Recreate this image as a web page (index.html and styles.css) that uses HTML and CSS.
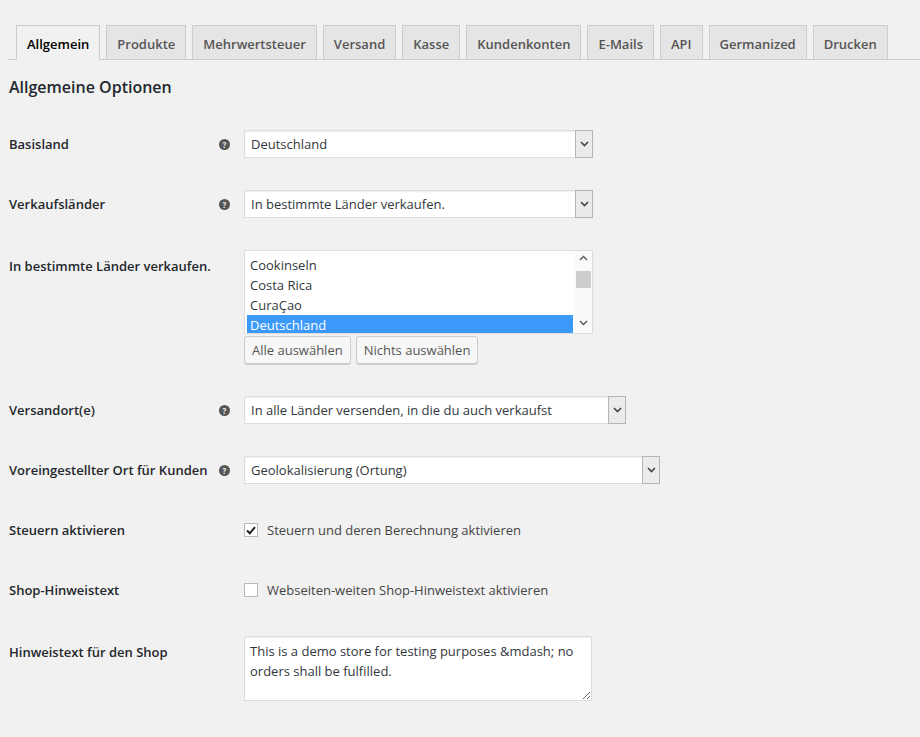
FILE: index.html
```html
<!DOCTYPE html>
<html lang="de">
  <head>
    <meta charset="UTF-8" />
    <title>Einstellungen - Allgemein</title>
    <link rel="stylesheet" href="styles.css">
  </head>
  <body>
    <div class="wrap">
      <!-- Settings tabs -->
      <nav class="tabs">
        <a class="tab active" href="#">Allgemein</a>
        <a class="tab" href="#">Produkte</a>
        <a class="tab" href="#">Mehrwertsteuer</a>
        <a class="tab" href="#">Versand</a>
        <a class="tab" href="#">Kasse</a>
        <a class="tab" href="#">Kundenkonten</a>
        <a class="tab" href="#">E-Mails</a>
        <a class="tab" href="#">API</a>
        <a class="tab" href="#">Germanized</a>
        <a class="tab" href="#">Drucken</a>
      </nav>

      <h2 class="section-title">Allgemeine Optionen</h2>

      <div class="form">
        <div class="row">
          <div class="label">Basisland <span class="help">?</span></div>
          <div class="field">
            <div class="select select-md">
              <span class="select-value">Deutschland</span>
              <span class="select-arrow"><svg width="9" height="6" viewBox="0 0 9 6"><path d="M1 1l3.5 3.5L8 1" fill="none" stroke="#444" stroke-width="1.6"/></svg></span>
            </div>
          </div>
        </div>

        <div class="row">
          <div class="label">Verkaufsländer <span class="help">?</span></div>
          <div class="field">
            <div class="select select-md">
              <span class="select-value">In bestimmte Länder verkaufen.</span>
              <span class="select-arrow"><svg width="9" height="6" viewBox="0 0 9 6"><path d="M1 1l3.5 3.5L8 1" fill="none" stroke="#444" stroke-width="1.6"/></svg></span>
            </div>
          </div>
        </div>

        <div class="row">
          <div class="label label-top">In bestimmte Länder verkaufen.</div>
          <div class="field">
            <div class="listbox">
              <div class="list-items">
                <div class="list-item">Cookinseln</div>
                <div class="list-item">Costa Rica</div>
                <div class="list-item">CuraÇao</div>
                <div class="list-item selected">Deutschland</div>
              </div>
              <div class="scrollbar">
                <svg width="9" height="6" viewBox="0 0 9 6"><path d="M1 5l3.5-3.5L8 5" fill="none" stroke="#555" stroke-width="1.4"/></svg>
                <div class="scroll-thumb"></div>
                <svg class="scroll-down" width="9" height="6" viewBox="0 0 9 6"><path d="M1 1l3.5 3.5L8 1" fill="none" stroke="#555" stroke-width="1.4"/></svg>
              </div>
            </div>
            <div class="button-group">
              <button class="button">Alle auswählen</button>
              <button class="button">Nichts auswählen</button>
            </div>
          </div>
        </div>

        <div class="row">
          <div class="label">Versandort(e) <span class="help">?</span></div>
          <div class="field">
            <div class="select select-lg">
              <span class="select-value">In alle Länder versenden, in die du auch verkaufst</span>
              <span class="select-arrow"><svg width="9" height="6" viewBox="0 0 9 6"><path d="M1 1l3.5 3.5L8 1" fill="none" stroke="#444" stroke-width="1.6"/></svg></span>
            </div>
          </div>
        </div>

        <div class="row">
          <div class="label">Voreingestellter Ort für Kunden <span class="help">?</span></div>
          <div class="field">
            <div class="select select-xl">
              <span class="select-value">Geolokalisierung (Ortung)</span>
              <span class="select-arrow"><svg width="9" height="6" viewBox="0 0 9 6"><path d="M1 1l3.5 3.5L8 1" fill="none" stroke="#444" stroke-width="1.6"/></svg></span>
            </div>
          </div>
        </div>

        <div class="row">
          <div class="label">Steuern aktivieren</div>
          <div class="field field-check">
            <span class="checkbox"><svg width="10" height="9" viewBox="0 0 10 9"><path d="M1 4.5l2.8 2.8L9 1.2" fill="none" stroke="#1e1e1e" stroke-width="2"/></svg></span>
            <span class="check-text">Steuern und deren Berechnung aktivieren</span>
          </div>
        </div>

        <div class="row">
          <div class="label">Shop-Hinweistext</div>
          <div class="field field-check">
            <span class="checkbox"></span>
            <span class="check-text">Webseiten-weiten Shop-Hinweistext aktivieren</span>
          </div>
        </div>

        <div class="row">
          <div class="label label-top">Hinweistext für den Shop</div>
          <div class="field">
            <textarea class="textarea" rows="3">This is a demo store for testing purposes &amp;mdash; no orders shall be fulfilled.</textarea>
          </div>
        </div>
      </div>
    </div>
  </body>
</html>
```

FILE: styles.css
```css
/* Page reset */
html,
body {
  margin: 0;
  padding: 0;
  background: #f1f1f1;
  font-family: "Open Sans", "Noto Sans", sans-serif;
  font-size: 13px;
  color: #23282d;
  overflow: hidden;
}

.wrap {
  padding-left: 9px;
}

/* Tabs */
.tabs {
  display: flex;
  gap: 6px;
  margin-left: -1px;
  padding: 25px 0 0 8px;
  border-bottom: 1px solid #ccc;
}

.tab {
  display: block;
  padding: 6px 10px 3px;
  line-height: 24px;
  font-size: 13px;
  font-weight: 600;
  color: #555;
  text-decoration: none;
  background: #e5e5e5;
  border: 1px solid #ccc;
  border-bottom: none;
}

.tab.active {
  background: #f1f1f1;
  color: #000;
  padding-bottom: 4px;
  margin-bottom: -1px;
}

/* Heading */
.section-title {
  margin: 16px 0 16px;
  font-size: 16px;
  line-height: 22px;
  font-weight: 600;
  color: #23282d;
}

/* Form rows */
.row {
  display: flex;
  align-items: flex-start;
  padding: 16px 0;
}

.label {
  width: 235px;
  flex-shrink: 0;
  display: flex;
  justify-content: space-between;
  align-items: center;
  line-height: 28px;
  font-weight: 600;
  color: #23282d;
}

.label-top {
  padding-top: 2px;
}

.help {
  width: 11px;
  height: 11px;
  margin-right: 14px;
  border-radius: 50%;
  background: #555;
  color: #f1f1f1;
  font-size: 8px;
  font-weight: 700;
  line-height: 11px;
  text-align: center;
}

.field {
  display: flex;
  flex-direction: column;
  min-height: 28px;
  color: #32373c;
}

/* Select boxes */
.select {
  display: flex;
  height: 28px;
  box-sizing: border-box;
  background: #fff;
  border: 1px solid #ddd;
  box-shadow: inset 0 1px 2px rgba(0, 0, 0, 0.07);
}

.select-md {
  width: 349px;
}

.select-lg {
  width: 382px;
}

.select-xl {
  width: 416px;
}

.select-value {
  flex: 1;
  padding-left: 6px;
  line-height: 26px;
  white-space: nowrap;
  overflow: hidden;
}

.select-arrow {
  width: 16px;
  display: flex;
  align-items: center;
  justify-content: center;
  margin: -1px -1px -1px 0;
  background: #ebebeb;
  border: 1px solid #b5b5b5;
}

/* Multi select list */
.listbox {
  display: flex;
  width: 349px;
  height: 84px;
  box-sizing: border-box;
  background: #fff;
  border: 1px solid #ddd;
  overflow: hidden;
}

.list-items {
  flex: 1;
  padding: 4px 2px 0;
}

.list-item {
  height: 20px;
  line-height: 20px;
  padding-left: 3px;
  font-size: 13px;
  color: #32373c;
}

.list-item.selected {
  background: #3c99fc;
  color: #fff;
}

.scrollbar {
  width: 17px;
  display: flex;
  flex-direction: column;
  align-items: center;
  padding-top: 4px;
  background: #fafafa;
}

.scroll-thumb {
  width: 15px;
  height: 17px;
  margin-top: 10px;
  background: #cdcdcd;
}

.scroll-down {
  margin-top: auto;
  margin-bottom: 7px;
}

.button-group {
  display: flex;
  gap: 5px;
  margin-top: 2px;
}

.button {
  height: 28px;
  padding: 0 7px;
  font-family: inherit;
  font-size: 13px;
  color: #555;
  background: #f7f7f7;
  border: 1px solid #ccc;
  border-radius: 3px;
  box-shadow: 0 1px 0 #ccc;
}

/* Checkboxes */
.field-check {
  flex-direction: row;
  align-items: center;
}

.checkbox {
  width: 14px;
  height: 14px;
  box-sizing: border-box;
  display: flex;
  align-items: center;
  justify-content: center;
  background: #fff;
  border: 1px solid #b4b9be;
  margin-right: 9px;
}

.check-text {
  color: #444;
}

/* Textarea */
.textarea {
  width: 348px;
  height: 65px;
  box-sizing: border-box;
  padding: 4px 5px;
  font-family: inherit;
  font-size: 13px;
  line-height: 20px;
  color: #32373c;
  background: #fff;
  border: 1px solid #ddd;
  box-shadow: inset 0 1px 2px rgba(0, 0, 0, 0.07);
  resize: vertical;
}
```
